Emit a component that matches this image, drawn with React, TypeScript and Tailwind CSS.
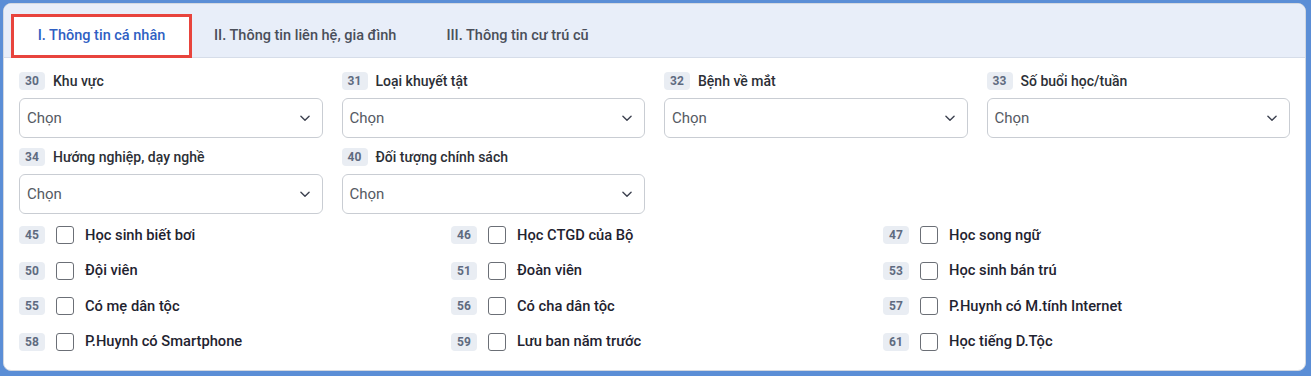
import React from 'react';

type SelectField = { no: number; label: string };
type CheckField = { no: number; label: string };

const selectRows: SelectField[][] = [
  [
    { no: 30, label: 'Khu vực' },
    { no: 31, label: 'Loại khuyết tật' },
    { no: 32, label: 'Bệnh về mắt' },
    { no: 33, label: 'Số buổi học/tuần' },
  ],
  [
    { no: 34, label: 'Hướng nghiệp, dạy nghề' },
    { no: 40, label: 'Đối tượng chính sách' },
  ],
];

const checkRows: CheckField[][] = [
  [
    { no: 45, label: 'Học sinh biết bơi' },
    { no: 46, label: 'Học CTGD của Bộ' },
    { no: 47, label: 'Học song ngữ' },
  ],
  [
    { no: 50, label: 'Đội viên' },
    { no: 51, label: 'Đoàn viên' },
    { no: 53, label: 'Học sinh bán trú' },
  ],
  [
    { no: 55, label: 'Có mẹ dân tộc' },
    { no: 56, label: 'Có cha dân tộc' },
    { no: 57, label: 'P.Huynh có M.tính Internet' },
  ],
  [
    { no: 58, label: 'P.Huynh có Smartphone' },
    { no: 59, label: 'Lưu ban năm trước' },
    { no: 61, label: 'Học tiếng D.Tộc' },
  ],
];

const Badge: React.FC<{ no: number }> = ({ no }) => (
  <span className="inline-flex h-[18px] w-[26px] shrink-0 items-center justify-center rounded-[4px] bg-[#e9edf3] text-[12px] font-bold text-[#5f6b80]">
    {no}
  </span>
);

const Select: React.FC<SelectField> = ({ no, label }) => (
  <div className="flex flex-col gap-[8px]">
    <div className="flex h-[18px] items-center gap-[8px]">
      <Badge no={no} />
      <span className="text-[14px] font-medium text-[#2c2f36]">{label}</span>
    </div>
    <div className="flex h-[40px] items-center justify-between rounded-[6px] border border-[#c9cdd3] bg-white pl-[7px] pr-[10px]">
      <span className="text-[15px] text-[#555a63]">Chọn</span>
      <svg width="14" height="14" viewBox="0 0 24 24" fill="none" stroke="#3d4250" strokeWidth="2.4" strokeLinecap="round" strokeLinejoin="round">
        <path d="M5 9l7 7 7-7" />
      </svg>
    </div>
  </div>
);

const Check: React.FC<CheckField> = ({ no, label }) => (
  <div className="flex h-[26px] items-center">
    <Badge no={no} />
    <span className="ml-[11px] h-[18px] w-[18px] shrink-0 rounded-[3px] border-[1.5px] border-[#6b6f76] bg-white" />
    <span className="ml-[11px] text-[14.7px] font-medium text-[#1f2330]">{label}</span>
  </div>
);

export default function App() {
  return (
    <div className="h-[376px] w-[1311px] bg-[#5b8ed6] pl-[3px] pr-[5px] pt-[3px] pb-[5px]" style={{ fontFamily: 'Roboto, "Noto Sans", sans-serif' }}>
      <div className="h-full overflow-hidden rounded-[8px] border border-[#d3d8e0] bg-white">
        <div className="flex h-[54px] items-end gap-[22px] border-b border-[#d6dde9] bg-[#e8eef9] pl-[7px]">
          <div className="mb-[-1px] flex h-[44px] w-[181px] items-center justify-center border-[3px] border-[#e8443d] bg-white text-[14.5px] font-medium text-[#2f5fc3]">
            I. Thông tin cá nhân
          </div>
          <div className="flex h-[43px] items-center text-[14.5px] font-medium text-[#4a4f5a]">II. Thông tin liên hệ, gia đình</div>
          <div className="ml-[28px] flex h-[43px] items-center text-[14.5px] font-medium text-[#4a4f5a]">III. Thông tin cư trú cũ</div>
        </div>
        <div className="px-[15px] pt-[14px]">
          <div className="flex flex-col gap-[10px]">
            {selectRows.map((row, i) => (
              <div key={i} className="grid grid-cols-4 gap-x-[19px]">
                {row.map((f) => (
                  <Select key={f.no} {...f} />
                ))}
              </div>
            ))}
          </div>
          <div className="mt-[8px] flex flex-col gap-[9.5px]">
            {checkRows.map((row, i) => (
              <div key={i} className="grid grid-cols-[432px_432px_1fr]">
                {row.map((f) => (
                  <Check key={f.no} {...f} />
                ))}
              </div>
            ))}
          </div>
        </div>
      </div>
    </div>
  );
}
